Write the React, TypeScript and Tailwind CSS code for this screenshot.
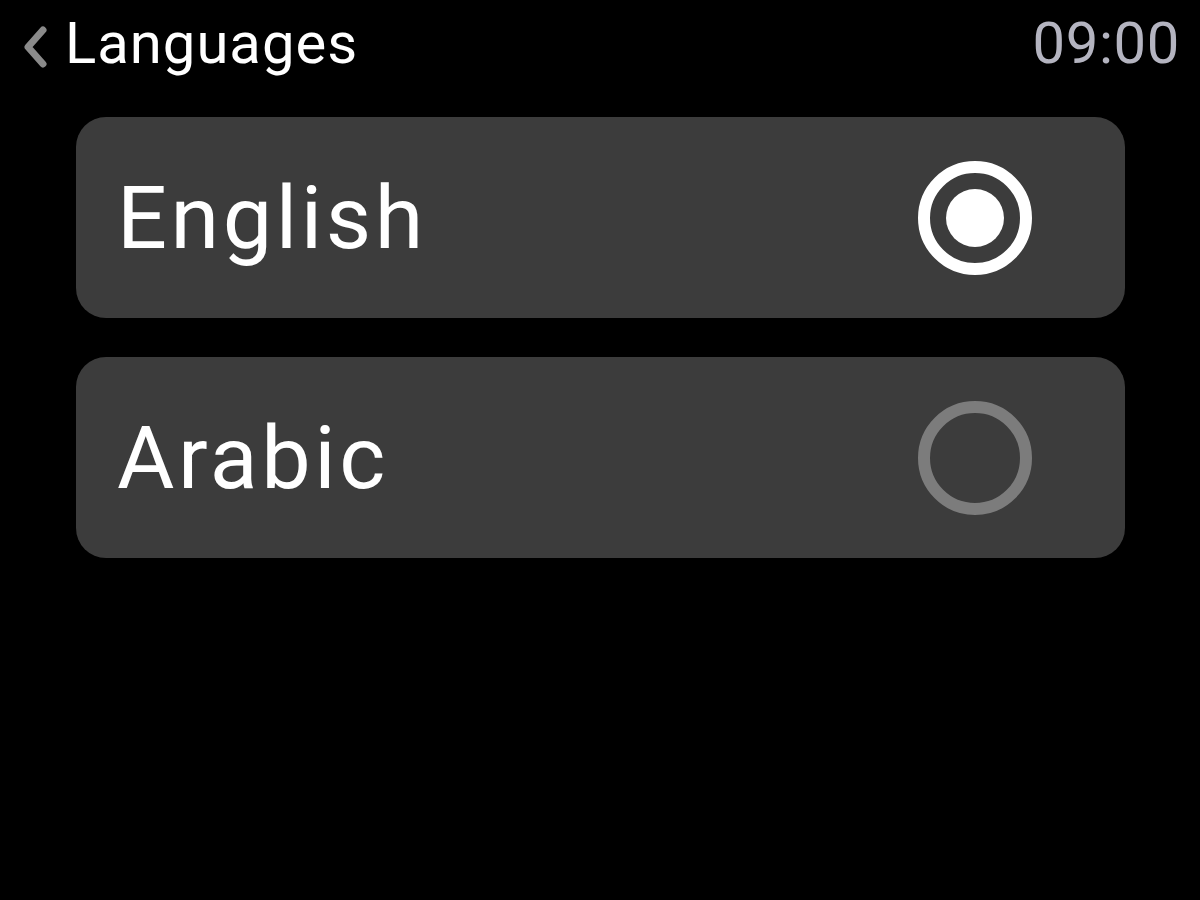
import { useState } from "react";

type Lang = { id: string; label: string };

const LANGS: Lang[] = [
  { id: "en", label: "English" },
  { id: "ar", label: "Arabic" },
];

function Radio({ on }: { on: boolean }) {
  return (
    <div
      className={`flex h-[114px] w-[114px] items-center justify-center rounded-full border-[12px] ${
        on ? "border-white" : "border-[#7c7c7c]"
      }`}
    >
      {on && <div className="h-[58px] w-[58px] rounded-full bg-white" />}
    </div>
  );
}

export default function App() {
  const [lang, setLang] = useState("en");

  return (
    <div
      className="min-h-[900px] w-full bg-black text-white"
      style={{ fontFamily: "Roboto, 'Noto Sans', sans-serif" }}
    >
      <header className="flex items-start justify-between pl-[22px] pr-[20px] pt-[14px]">
        <div className="flex items-center gap-[17px]">
          <svg width="26" height="42" viewBox="0 0 26 42" className="mt-[8px]">
            <path
              d="M21 4 L6 21 L21 38"
              fill="none"
              stroke="#8a8a8a"
              strokeWidth="7"
              strokeLinecap="round"
              strokeLinejoin="round"
            />
          </svg>
          <span className="text-[58px] leading-none tracking-[1px]">Languages</span>
        </div>
        <span className="text-[58px] leading-none tracking-[0.6px] text-[#b4b4c0]">09:00</span>
      </header>

      <div className="ml-[76px] mt-[45px] flex w-[1049px] flex-col gap-[39px]">
        {LANGS.map((l) => (
          <button
            key={l.id}
            type="button"
            onClick={() => setLang(l.id)}
            className="flex h-[201px] items-center justify-between rounded-[30px] bg-[#3c3c3c] pl-[41px] pr-[93px] text-left"
          >
            <span className="text-[88px] leading-none tracking-[3.6px]">{l.label}</span>
            <Radio on={lang === l.id} />
          </button>
        ))}
      </div>
    </div>
  );
}
